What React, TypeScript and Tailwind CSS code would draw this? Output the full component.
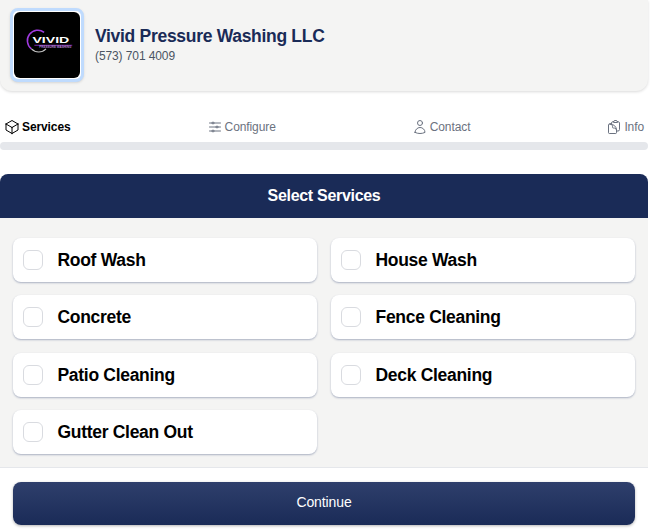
import { HiOutlineCube, HiOutlineAdjustmentsHorizontal, HiOutlineUser, HiOutlineClipboardDocument } from "react-icons/hi2";
import type { IconType } from "react-icons";

const services = [
  "Roof Wash",
  "House Wash",
  "Concrete",
  "Fence Cleaning",
  "Patio Cleaning",
  "Deck Cleaning",
  "Gutter Clean Out",
];

function Logo() {
  return (
    <div className="w-[74px] h-[74px] rounded-lg border-[3px] border-[#bfdbfe] bg-white p-px shadow-sm flex-none">
      <div className="w-full h-full rounded-md bg-black flex items-center justify-center">
        <svg viewBox="0 0 68 68" className="w-full h-full">
          <path d="M31 21 A10.5 10.5 0 0 0 18 38" fill="none" stroke="#a03be0" strokeWidth="1.6" />
          <path d="M18 38 A10.5 10.5 0 0 0 33 38" fill="none" stroke="#c4c4c4" strokeWidth="1.1" />
          <text
            x="19"
            y="32"
            textLength="38"
            lengthAdjust="spacingAndGlyphs"
            fill="#ffffff"
            fontFamily="Liberation Sans"
            fontWeight="700"
            fontSize="10"
          >
            VIVID
          </text>
          <path d="M21 34.3 H60" stroke="#8a2bc4" strokeWidth="0.9" />
          <text
            x="26"
            y="37.6"
            textLength="33"
            lengthAdjust="spacingAndGlyphs"
            fill="#b583d6"
            fontFamily="Liberation Sans"
            fontWeight="700"
            fontSize="3"
          >
            PRESSURE WASHING
          </text>
        </svg>
      </div>
    </div>
  );
}

function Tab({ icon: Icon, label, active }: { icon: IconType; label: string; active?: boolean }) {
  return (
    <div className={`flex items-center gap-[2px] text-xs tracking-[-0.1px] ${active ? "text-black font-bold" : "text-[#6b7280]"}`}>
      <Icon className="w-4 h-4" />
      <span>{label}</span>
    </div>
  );
}

export default function App() {
  return (
    <div className="w-[650px] h-[531px] overflow-hidden bg-white font-['Liberation_Sans',sans-serif]">
      <div className="w-[648px] flex flex-col">
        <header className="h-[91px] bg-[#f4f4f3] rounded-b-xl shadow-[0_1px_3px_rgba(0,0,0,0.15)] flex items-center gap-[11px] pl-[10px] pb-[1px]">
          <Logo />
          <div className="-mt-[3px]">
            <h1 className="text-[17.5px] leading-6 tracking-[-0.3px] font-bold text-[#1a2b57]">Vivid Pressure Washing LLC</h1>
            <p className="text-xs leading-[16px] tracking-[-0.1px] text-[#4b5563]">(573) 701 4009</p>
          </div>
        </header>

        <nav className="flex justify-between items-center pl-[4px] pr-[4px] mt-[28px] h-4">
          <Tab icon={HiOutlineCube} label="Services" active />
          <Tab icon={HiOutlineAdjustmentsHorizontal} label="Configure" />
          <Tab icon={HiOutlineUser} label="Contact" />
          <Tab icon={HiOutlineClipboardDocument} label="Info" />
        </nav>
        <div className="h-2 mt-[7px] rounded-full bg-[#e5e7eb]" />

        <section className="mt-6 h-[357px] flex flex-col">
          <div className="h-[44px] rounded-t-lg bg-[#1a2b57] flex items-center justify-center text-white font-bold text-[16px] tracking-[-0.3px]">
            Select Services
          </div>
          <div className="h-[250px] bg-[#f4f4f3] border-b border-[#e5e7eb] pt-5 px-[13px]">
            <div className="grid grid-cols-2 gap-x-[14px] gap-y-[13.33px]">
              {services.map((name) => (
                <label
                  key={name}
                  className="h-11 bg-white rounded-lg shadow-[0_1px_2px_rgba(30,50,100,0.35)] flex items-center pl-[10px] gap-[14.5px]"
                >
                  <span className="w-5 h-5 rounded-md bg-white border border-[#d9dbe0]" />
                  <span className="text-[17.5px] tracking-[-0.3px] font-bold text-black">{name}</span>
                </label>
              ))}
            </div>
          </div>
          <div className="pt-[14px] px-[13px]">
            <button className="w-full h-[43px] pb-[3px] rounded-lg bg-gradient-to-b from-[#2f3f6c] to-[#1a2b57] shadow-[0_1px_3px_rgba(0,0,0,0.3)] text-white text-sm tracking-[-0.1px]">
              Continue
            </button>
          </div>
        </section>
      </div>
    </div>
  );
}
